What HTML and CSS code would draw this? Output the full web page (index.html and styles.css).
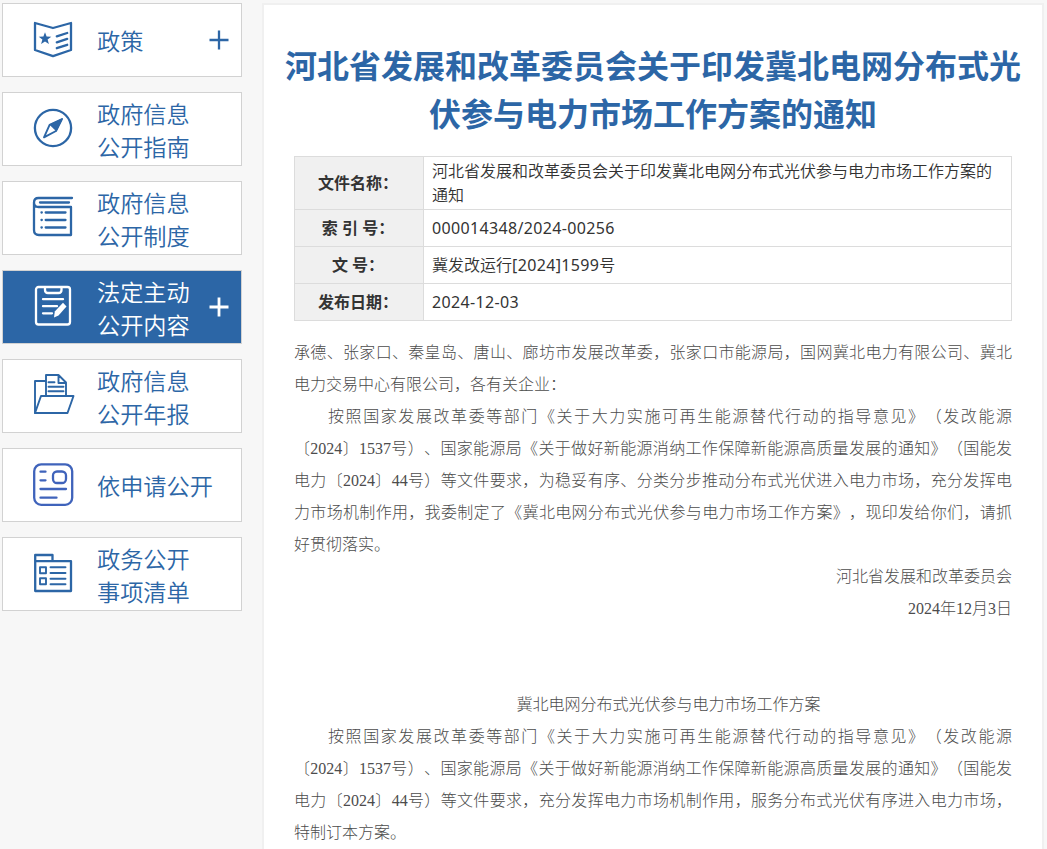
FILE: index.html
```html
<!DOCTYPE html>
<html lang="zh-CN">
<head>
<meta charset="utf-8">
<title>河北省发展和改革委员会关于印发冀北电网分布式光伏参与电力市场工作方案的通知</title>
<link rel="stylesheet" href="styles.css">
</head>
<body>
<div class="page">
  <nav class="sidebar">
    <a class="card">
      <svg class="icon" viewBox="0 0 46 46"><path d="M5 6 23 11 41 6V33L23 39.2 5 33Z"/><path class="solid" d="M15 15.2l1.6 4.4 4.7.1-3.7 2.9 1.3 4.5-3.9-2.6-3.9 2.6 1.3-4.5-3.7-2.9 4.700-.1z"/><path d="M26.8 19.400l10.400-3.400M26.800 25.300l10.400-3.400M26.800 31.200l10.400-3.400"/></svg>
      <span class="label">政策</span>
      <svg class="plus" viewBox="0 0 20 20"><path d="M.5 10h19M10 .5v19"/></svg>
    </a>
    <a class="card">
      <svg class="icon" viewBox="0 0 46 46"><circle cx="23" cy="22" r="18.1"/><path class="fine" d="M32 13 19.6 18.8 14 31.4 26 25Z"/><path class="solid" d="M33 12 19.2 18.6 26.4 25.4Z"/></svg>
      <span class="label">政府信息<br>公开指南</span>
    </a>
    <a class="card">
      <svg class="icon" viewBox="0 0 46 46"><path d="M42 3H8.500Q4 3 4 7.500T8.500 12H41V40H9Q4 40 4 35V7.500M10 7.500H39M15.700 17.500H35.500M15.700 25H35.500M15.700 32.500H35.500M11.500 17.500h.3M11.500 25h.3M11.500 32.500h.3"/></svg>
      <span class="label">政府信息<br>公开制度</span>
    </a>
    <a class="card active">
      <svg class="icon" viewBox="0 0 46 46"><rect x="6" y="3" width="34" height="37.500" rx="2.500"/><path d="M15 3.500V6Q15 9 18 9H28.500Q31.500 9 31.500 6V3.500M13 15.200H33M13 22.200H27M13 29.300H22"/><path class="solid" d="M33 18.800 36.500 22.500 28.500 31.500 24 33.500 24.800 27.500Z"/></svg>
      <span class="label">法定主动<br>公开内容</span>
      <svg class="plus" viewBox="0 0 20 20"><path d="M.5 10h19M10 .5v19"/></svg>
    </a>
    <a class="card">
      <svg class="icon" viewBox="0 0 46 46"><path class="fine" d="M16 23V2H28.500L36 9.500V23M28.500 2V10H36M18.500 9.200H24.500M18.500 13.700H33.500M18.500 18.200H33.500M5 40 11 23H43.500L37.500 40Z"/><path class="fine" d="M15.500 8H5V40"/></svg>
      <span class="label">政府信息<br>公开年报</span>
    </a>
    <a class="card apply">
      <svg class="icon" viewBox="0 0 46 46"><rect x="4.200" y="2.300" width="38" height="40.500" rx="7"/><rect x="23" y="9.500" width="13" height="11.500" rx="4"/><path d="M10.500 9.700H15.500M10.500 18.300H15.500M10.500 27H36M10.500 35.700H26.500"/></svg>
      <span class="label">依申请公开</span>
    </a>
    <a class="card">
      <svg class="icon" viewBox="0 0 46 46"><path d="M5.200 40H41V10.200H5.200ZM5.200 10V4H22.500V10"/><path class="fine" d="M10 16.200h6v6h-6zM10 27.300h6v6h-6zM20.500 16.300H35.500M20.500 22H35.500M20.500 27.700H35.500M20.500 33.300H35.500"/></svg>
      <span class="label">政务公开<br>事项清单</span>
    </a>
  </nav>
  <main class="panel">
    <h1 class="title">河北省发展和改革委员会关于印发冀北电网分布式光<br>伏参与电力市场工作方案的通知</h1>
    <table class="meta">
      <tr class="tall"><th>文件名称：</th><td>河北省发展和改革委员会关于印发冀北电网分布式光伏参与电力市场工作方案的<br>通知</td></tr>
      <tr><th>索 引 号：</th><td><span class="num">000014348/2024-00256</span></td></tr>
      <tr><th>文 号：</th><td>冀发改运行<span class="num">[2024]1599</span>号</td></tr>
      <tr><th>发布日期：</th><td><span class="num">2024-12-03</span></td></tr>
    </table>
    <article class="body">
      <p><span class="line">承德、张家口、秦皇岛、唐山、廊坊市发展改革委，张家口市能源局，国网冀北电力有限公司、冀北</span><span class="line last">电力交易中心有限公司，各有关企业：</span></p>
      <p><span class="line first">按照国家发展改革委等部门《关于大力实施可再生能源替代行动的指导意见》（发改能源</span><span class="line">〔2024〕1537号）、国家能源局《关于做好新能源消纳工作保障新能源高质量发展的通知》（国能发</span><span class="line">电力〔2024〕44号）等文件要求，为稳妥有序、分类分步推动分布式光伏进入电力市场，充分发挥电</span><span class="line">力市场机制作用，我委制定了《冀北电网分布式光伏参与电力市场工作方案》，现印发给你们，请抓</span><span class="line last">好贯彻落实。</span></p>
      <p class="sign">河北省发展和改革委员会</p>
      <p class="sign">2024年12月3日</p>
      <p class="subtitle">冀北电网分布式光伏参与电力市场工作方案</p>
      <p><span class="line first">按照国家发展改革委等部门《关于大力实施可再生能源替代行动的指导意见》（发改能源</span><span class="line">〔2024〕1537号）、国家能源局《关于做好新能源消纳工作保障新能源高质量发展的通知》（国能发</span><span class="line">电力〔2024〕44号）等文件要求，充分发挥电力市场机制作用，服务分布式光伏有序进入电力市场，</span><span class="line last">特制订本方案。</span></p>
    </article>
  </main>
</div>
</body>
</html>
```

FILE: styles.css
```css
* { box-sizing: border-box; }
body {
  margin: 0;
  background: #f7f7f7;
  font-family: "Noto Sans", "Noto Sans CJK SC", sans-serif;
  text-spacing-trim: space-all;
}
.page {
  display: flex;
  gap: 20px;
  height: 849px;
  padding: 3px 3px 0 2px;
  overflow: hidden;
}
.sidebar {
  display: flex;
  flex-direction: column;
  gap: 15px;
  width: 240px;
  flex: none;
}
.card {
  display: flex;
  align-items: center;
  height: 74px;
  padding: 0 12px 0 27px;
  border: 1px solid #d2d2d2;
  background: #fff;
  color: #2c66a6;
}
.card.active { background: #2c66a6; color: #fff; }
.icon { width: 46px; height: 46px; flex: none; }
.icon, .plus {
  fill: none;
  stroke: currentColor;
  stroke-width: 2.3;
  stroke-linecap: round;
  stroke-linejoin: round;
}
.icon .solid { fill: currentColor; stroke: none; }
.icon .fine { stroke-width: 1.9; }
.apply .icon { color: #3f63bb; }
.label {
  margin-left: 21px;
  padding-top: 1px;
  font-family: "Noto Sans CJK SC", sans-serif;
  font-size: 23.2px;
  font-weight: 350;
  line-height: 33px;
  white-space: nowrap;
}
.plus {
  width: 20px;
  height: 20px;
  margin-left: auto;
  stroke-linecap: butt;
}
.active .plus { stroke-width: 2.8; }
.panel {
  width: 782px;
  height: 900px;
  flex: none;
  border: 2px solid #f0f0f0;
  background: #fff;
  padding: 35px 20px 0 30px;
}
.title {
  width: 738px;
  margin: 0 0 20px -10px;
  color: #2c66a6;
  font-family: "Noto Sans CJK SC", sans-serif;
  font-size: 32px;
  font-weight: 700;
  line-height: 48px;
  text-align: center;
  white-space: nowrap;
}
.meta {
  width: 718px;
  table-layout: fixed;
  border-collapse: collapse;
  color: #333;
  font-size: 16px;
  line-height: 24px;
}
.meta tr { height: 37px; }
.meta .tall { height: 53px; }
.meta th, .meta td { border: 1px solid #dcdcdc; padding: 0; }
.meta th { width: 129px; padding-right: 2px; background: #f0f0f0; font-weight: 700; }
.meta td {
  padding-left: 8px;
  font-family: "Noto Sans", "Noto Sans CJK SC", sans-serif;
  font-weight: 350;
  white-space: nowrap;
}
.num { font-weight: 400; letter-spacing: 0.35px; }
.body {
  width: 718px;
  margin-top: 16px;
  color: #4c4c4c;
  font-family: "Liberation Serif", "Noto Sans CJK SC", serif;
  font-size: 16px;
  font-weight: 300;
  line-height: 32px;
}
.body p { margin: 0; }
.line {
  display: block;
  height: 32px;
  text-align: justify;
  text-align-last: justify;
  text-justify: inter-character;
  white-space: nowrap;
}
.line.first { padding-left: 34px; }
.line.last { text-align-last: left; }
.body .sign { text-align: right; }
.body .subtitle { margin-top: 64px; padding-left: 31px; text-align: center; }
```
